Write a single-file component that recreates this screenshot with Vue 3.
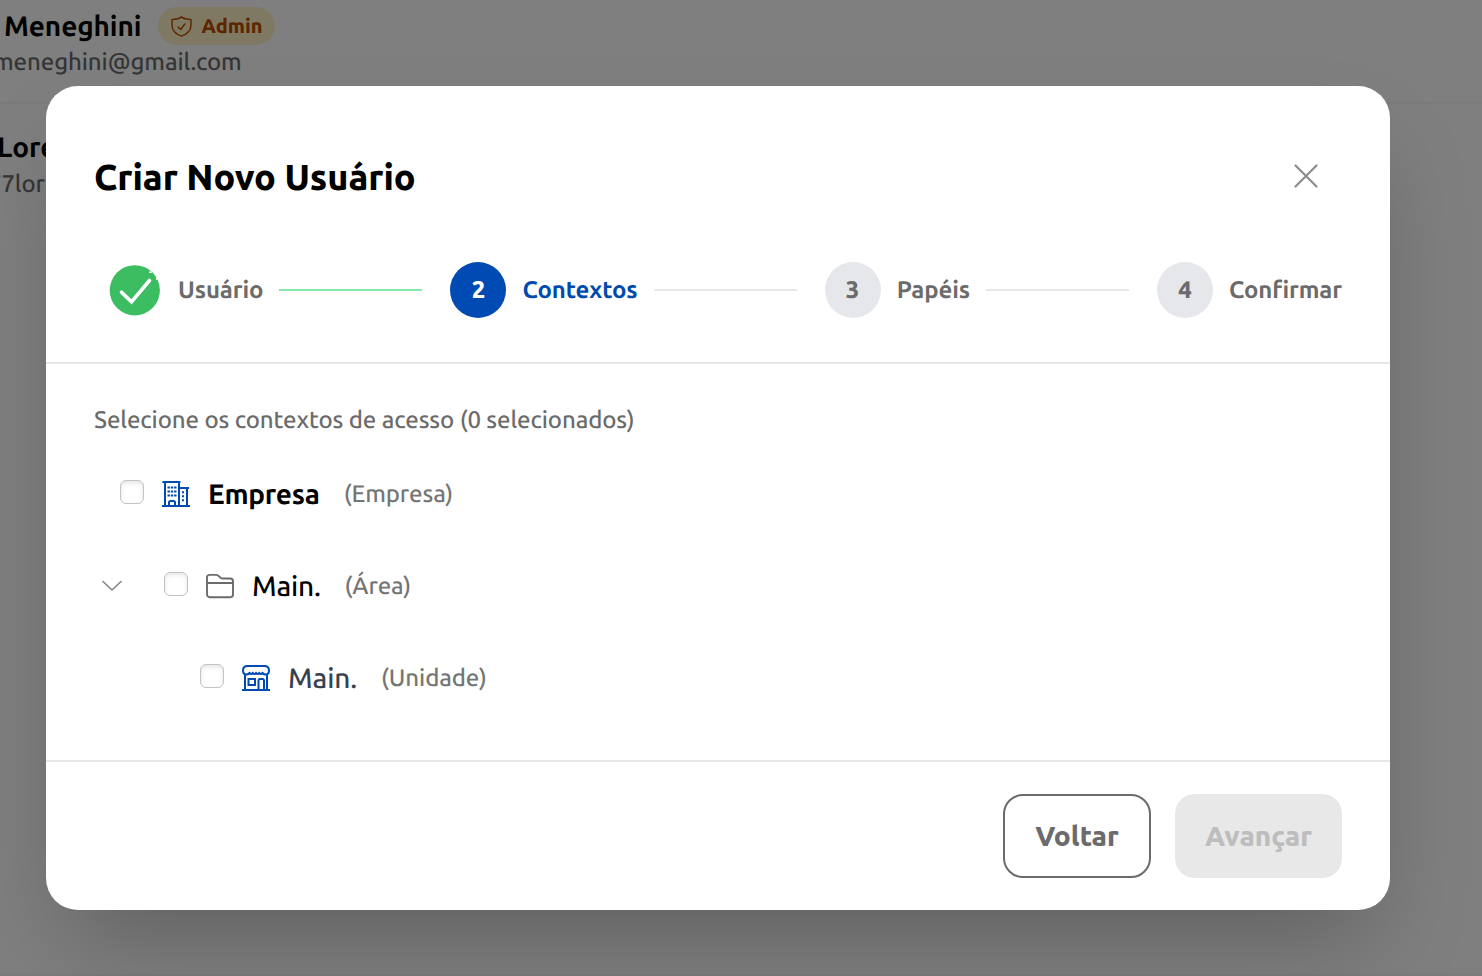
<template>
  <div class="screen">
    <!-- Lista de usuários atrás do modal -->
    <div class="users">
      <div v-for="u in users" :key="u.email" class="user-row">
        <div class="user-head">
          <span class="user-name">{{ u.name }}</span>
          <span v-if="u.role" class="badge">
            <svg viewBox="0 0 20 20" width="21" height="21" fill="none" stroke="currentColor" stroke-width="1.4" stroke-linejoin="round" stroke-linecap="round">
              <path d="M10 .8C8 2.600 4.500 3.200 1 3.200V9C1 14 5.500 17.500 10 19.200C14.500 17.500 19 14 19 9V3.200C15.500 3.200 12 2.600 10 .8Z" />
              <path d="M6.800 10.600L9.200 12.800L13.200 7.600" />
            </svg>
            <span class="badge-text">{{ u.role }}</span>
          </span>
        </div>
        <div class="user-email">{{ u.email }}</div>
      </div>
    </div>

    <div class="overlay">
      <div class="modal">
        <header class="modal-header">
          <div class="title-row">
            <h2>Criar Novo Usuário</h2>
            <button class="close" aria-label="Fechar">
              <svg viewBox="0 0 24 24" width="24" height="24" fill="none" stroke="currentColor" stroke-width="2.2" stroke-linecap="round">
                <path d="M1.500 1.500L22.500 22.500M22.500 1.500L1.500 22.500" />
              </svg>
            </button>
          </div>

          <div class="stepper">
            <template v-for="(s, i) in steps" :key="s">
              <div class="step" :class="{ active: current === i + 1 }">
                <svg v-if="i + 1 < current" class="done" viewBox="0 0 56 56" width="56" height="56">
                  <circle cx="28.800" cy="28.300" r="25.100" fill="#3dbd61" />
                  <path d="M15.500 30.200L25.500 39.800L43.500 18.500" fill="none" stroke="#fff" stroke-width="3.600" stroke-linecap="round" />
                  <path d="M43.600 10.300h1.600M45 8.300h.6M50.600 16.800v.5" stroke="#fff" stroke-width="1.500" stroke-linecap="round" />
                </svg>
                <span v-else class="circle">{{ i + 1 }}</span>
                <span class="label">{{ s }}</span>
              </div>
              <div v-if="i < steps.length - 1" class="line" :class="{ passed: i + 1 < current }"></div>
            </template>
          </div>
        </header>

        <section class="modal-body">
          <p class="hint">Selecione os contextos de acesso ({{ selected.length }} selecionados)</p>
          <div v-for="n in nodes" :key="n.id" class="node" :class="n.id">
            <button v-if="n.expandable" class="toggle" aria-label="Recolher">
              <svg viewBox="0 0 20 12" width="20" height="12" fill="none" stroke="currentColor" stroke-width="1.600" stroke-linecap="round" stroke-linejoin="round">
                <path d="M1 1.500L10 10L19 1.500" />
              </svg>
            </button>
            <input type="checkbox" :value="n.id" v-model="selected" />
            <svg v-if="n.id === 'empresa'" class="icon blue" viewBox="0 0 28 28" fill="none" stroke="currentColor" stroke-width="2">
              <path d="M0 26H28M.5 2H18.500M3 2V26M17 2V26M17 8H27M25 8V26" />
              <path d="M7 26V22.500Q7 21 8.500 21H11.500Q13 21 13 22.500V26" />
              <path d="M5.500 7.500H14.500M5.500 11.500H14.500M5.500 15.500H14.500" stroke-dasharray="2.400 0.900" />
              <path d="M21 11.200V22" stroke-dasharray="2 2" />
            </svg>
            <svg v-else-if="n.id === 'area'" class="icon" viewBox="0 0 28 28" fill="none" stroke="currentColor" stroke-width="1.900" stroke-linejoin="round">
              <path d="M1 11V5A2.600 2.600 0 0 1 3.600 2.900H10Q11.400 2.900 12.500 3.900L14.500 5.700Q15.500 6.500 17 6.500H24.200A2.800 2.800 0 0 1 27 9.300V11" />
              <path d="M1 11H27V22.600A2.600 2.600 0 0 1 24.400 25.200H3.600A2.600 2.600 0 0 1 1 22.600Z" />
            </svg>
            <svg v-else class="icon blue" viewBox="0 0 28 28" fill="none" stroke="currentColor" stroke-width="2">
              <path d="M0 26H28M3 11V26M25 11V26" />
              <path d="M5.500 2H22.500C25.800 2 27 4.300 27 6.500C27 9 25.500 10.500 23.500 10.500C21.800 10.500 20.500 9 20.500 9Q18.900 10.800 17.300 9Q15.700 10.800 14 9Q12.300 10.800 10.700 9Q9.100 10.800 7.500 9C7.500 9 6.200 10.500 4.500 10.500C2.500 10.500 1 9 1 6.500C1 4.300 2.200 2 5.500 2Z" />
              <path d="M6.500 15H13V21H6.500ZM16.500 26V17Q16.500 15 18 15H20.500Q22 15 22 17V26" />
            </svg>
            <span class="node-name">{{ n.name }}</span>
            <span class="node-type">({{ n.type }})</span>
          </div>
        </section>

        <footer class="modal-footer">
          <button class="btn back">Voltar</button>
          <button class="btn next" :disabled="!selected.length">Avançar</button>
        </footer>
      </div>
    </div>
  </div>
</template>

<script setup>
import { ref } from 'vue'

const current = ref(2)
const selected = ref([])

const users = [
  { name: 'Meneghini', email: 'meneghini@gmail.com', role: 'Admin' },
  { name: 'Lore', email: '77lor', role: '' }
]

const steps = ['Usuário', 'Contextos', 'Papéis', 'Confirmar']

const nodes = [
  { id: 'empresa', name: 'Empresa', type: 'Empresa' },
  { id: 'area', name: 'Main.', type: 'Área', expandable: true },
  { id: 'unidade', name: 'Main.', type: 'Unidade' }
]
</script>

<style>
body {
  overflow: hidden;
}
</style>

<style scoped>
.screen {
  position: relative;
  width: 1482px;
  height: 976px;
  overflow: hidden;
  background: #fff;
  font-family: Ubuntu, 'Noto Sans', sans-serif;
  font-size: 24px;
  font-weight: 480;
  text-rendering: geometricPrecision;
  color: #000;
}

button {
  font-family: inherit;
  padding: 0;
  border: 0;
  background: none;
}

svg {
  display: block;
  flex: none;
}

/* lista */
.user-row {
  height: 104px;
  box-sizing: border-box;
  border-bottom: 2px solid #f7f7f7;
  white-space: nowrap;
}

.user-row + .user-row {
  padding-top: 17px;
  height: 872px;
}

.user-head {
  display: flex;
  align-items: center;
  gap: 17px;
  height: 52px;
  padding-left: 4px;
}

.user-row + .user-row .user-head {
  margin-left: -7px;
  height: 53px;
}

.user-name {
  font-size: 28px;
  font-weight: 600;
  letter-spacing: -0.1px;
}

.badge {
  display: flex;
  align-items: center;
  gap: 9px;
  width: 117px;
  height: 38px;
  padding-left: 13px;
  box-sizing: border-box;
  border-radius: 19px;
  background: #fef3c7;
  color: #bb4d00;
}

.badge-text {
  margin-bottom: 1px;
  font-size: 20px;
  font-weight: 800;
}

.user-email {
  height: 20px;
  line-height: 20px;
  margin-left: -7px;
  color: #6b6b6b;
  font-size: 24px;
  letter-spacing: -0.1px;
}

.user-row + .user-row .user-email {
  margin-left: -12px;
}

/* modal */
.overlay {
  position: absolute;
  inset: 0;
  display: flex;
  align-items: flex-start;
  padding: 86px 0 0 46px;
  background: rgba(0, 0, 0, 0.5);
}

.modal {
  display: flex;
  flex-direction: column;
  width: 1344px;
  height: 824px;
  border-radius: 32px;
  background: #fff;
  box-shadow: 0 50px 100px -24px rgba(0, 0, 0, 0.25);
}

.modal-header {
  box-sizing: border-box;
  height: 278px;
  padding: 60px 48px 0;
  border-bottom: 2px solid #e7e7e7;
}

.title-row {
  display: flex;
  align-items: center;
  justify-content: space-between;
  height: 60px;
}

h2 {
  margin: 0;
  font-size: 36px;
  font-weight: 800;
  letter-spacing: -0.05px;
}

.close {
  margin-right: 24px;
  color: #8c8c8c;
}

.stepper {
  display: flex;
  align-items: center;
  height: 56px;
  margin-top: 56px;
  padding-left: 12px;
}

.step {
  display: flex;
  align-items: center;
  gap: 16px;
}

.circle {
  display: flex;
  align-items: center;
  justify-content: center;
  width: 56px;
  height: 56px;
  padding-bottom: 2px;
  box-sizing: border-box;
  border-radius: 50%;
  background: #e5e7eb;
  color: #6b6b6b;
  font-size: 24px;
  font-weight: 800;
}

.active .circle {
  background: #004ab3;
  color: #fff;
}

.label {
  margin-bottom: 2px;
  white-space: nowrap;
  font-size: 24px;
  font-weight: 640;
  letter-spacing: -0.12px;
  color: #6b6b6b;
}

.active .label {
  color: #004aad;
}

.line {
  flex: 1;
  height: 2px;
  margin: 0 28px 0 16px;
  background: #e5e7eb;
}

.line.passed {
  background: #86e8a8;
}

.modal-body {
  box-sizing: border-box;
  height: 396px;
  padding: 38px 48px 0;
}

.hint {
  margin: 0 0 26px;
  height: 36px;
  line-height: 36px;
  color: #6b6b6b;
  font-size: 24px;
  letter-spacing: -0.11px;
}

.node {
  display: flex;
  align-items: center;
  height: 60px;
  margin-bottom: 32px;
}

.node.empresa {
  padding-left: 26px;
}

.node.area {
  padding-left: 8px;
}

.node.unidade {
  padding-left: 106px;
}

.toggle {
  width: 62px;
  color: #858585;
}

input[type='checkbox'] {
  appearance: none;
  box-sizing: border-box;
  width: 24px;
  height: 24px;
  margin: 0 18px 4px 0;
  border: 1.500px solid #c4c4c4;
  border-radius: 6px;
  background: #fff;
  box-shadow: inset 0 2px 4px rgba(0, 0, 0, 0.1);
}

.icon {
  width: 28px;
  height: 28px;
  margin-right: 18px;
  color: #6b6b6b;
}

.icon.blue {
  color: #004ab3;
}

.node-name {
  margin-right: 24px;
  font-size: 28px;
  font-weight: 540;
  letter-spacing: -0.2px;
}

.node.empresa .node-name {
  font-weight: 620;
  letter-spacing: -0.25px;
}

.node.unidade .node-name {
  font-weight: 480;
  letter-spacing: -0.1px;
  color: #374151;
}

.node-type {
  margin-bottom: 1px;
  font-size: 24px;
  letter-spacing: -0.11px;
  color: #757575;
}

.modal-footer {
  display: flex;
  justify-content: flex-end;
  gap: 24px;
  padding: 32px 48px;
  border-top: 2px solid #e7e7e7;
}

.btn {
  box-sizing: border-box;
  height: 84px;
  padding-bottom: 2px;
  border-radius: 20px;
  font-size: 28px;
  font-weight: 800;
}

.back {
  width: 148px;
  border: 2px solid #6b6b6b;
  color: #6b6b6b;
}

.next {
  width: 167px;
  background: #e8e8e8;
  color: #bdbdbd;
}
</style>
